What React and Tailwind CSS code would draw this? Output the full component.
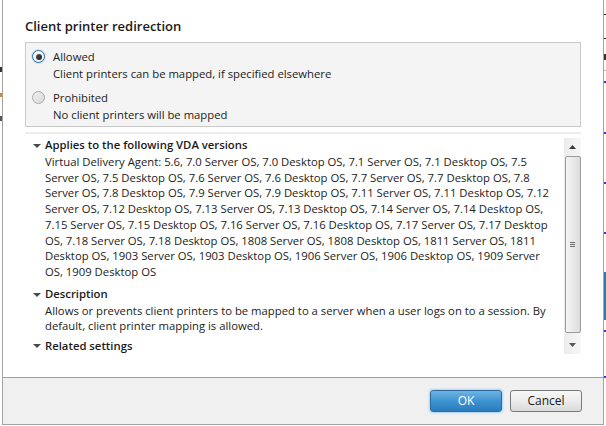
import React from 'react'

const vdaLines = [
  'Virtual Delivery Agent: 5.6, 7.0 Server OS, 7.0 Desktop OS, 7.1 Server OS, 7.1 Desktop OS, 7.5',
  'Server OS, 7.5 Desktop OS, 7.6 Server OS, 7.6 Desktop OS, 7.7 Server OS, 7.7 Desktop OS, 7.8',
  'Server OS, 7.8 Desktop OS, 7.9 Server OS, 7.9 Desktop OS, 7.11 Server OS, 7.11 Desktop OS, 7.12',
  'Server OS, 7.12 Desktop OS, 7.13 Server OS, 7.13 Desktop OS, 7.14 Server OS, 7.14 Desktop OS,',
  '7.15 Server OS, 7.15 Desktop OS, 7.16 Server OS, 7.16 Desktop OS, 7.17 Server OS, 7.17 Desktop',
  'OS, 7.18 Server OS, 7.18 Desktop OS, 1808 Server OS, 1808 Desktop OS, 1811 Server OS, 1811',
  'Desktop OS, 1903 Server OS, 1903 Desktop OS, 1906 Server OS, 1906 Desktop OS, 1909 Server',
  'OS, 1909 Desktop OS',
]

const descLines = [
  'Allows or prevents client printers to be mapped to a server when a user logs on to a session. By',
  'default, client printer mapping is allowed.',
]

function Radio({ checked }) {
  if (checked) {
    return (
      <div className="w-[15px] h-[15px] rounded-full bg-[#cfe4f7] flex items-center justify-center">
        <div className="w-[13px] h-[13px] rounded-full border border-[#2f6fa6] bg-gradient-to-b from-[#ffffff] to-[#e8f1fa] flex items-center justify-center">
          <div className="w-[6px] h-[6px] rounded-full bg-gradient-to-br from-[#555] to-[#1c1c1c]" />
        </div>
      </div>
    )
  }
  return (
    <div className="w-[15px] h-[15px] flex items-center justify-center">
      <div className="w-[13px] h-[13px] rounded-full border border-[#a8a8a8] bg-gradient-to-br from-[#f0f0f0] to-[#d8d8d8]" />
    </div>
  )
}

function Option({ checked, label, hint }) {
  return (
    <div className="flex items-start">
      <div className="w-[27px] pl-[5px] pt-[1px]">
        <Radio checked={checked} />
      </div>
      <div className="leading-[17px]">
        <div>{label}</div>
        <div>{hint}</div>
      </div>
    </div>
  )
}

function Caret() {
  return (
    <svg width="8" height="4" viewBox="0 0 8 4" className="block">
      <polygon points="0,0 8,0 4,4" fill="#4a4a4a" />
    </svg>
  )
}

function Section({ title, lines, className }) {
  return (
    <div className={className}>
      <div className="flex items-center h-[15.75px]">
        <div className="w-[14px] pl-[2px]">
          <Caret />
        </div>
        <div className="font-semibold text-[#1a1a1a]">{title}</div>
      </div>
      {lines.map((l, i) => (
        <div key={i} className="pl-[14px] whitespace-nowrap h-[15.75px] leading-[15.75px]">{l}</div>
      ))}
    </div>
  )
}

function Scrollbar() {
  return (
    <div className="w-[17px] h-[216px] mt-[4px] bg-gradient-to-r from-[#ececec] to-[#f6f6f6] flex flex-col items-center">
      <div className="h-[18px] flex items-center justify-center">
        <svg width="7" height="4" viewBox="0 0 7 4"><polygon points="0,4 7,4 3.5,0" fill="#3a3a3a" /></svg>
      </div>
      <div className="w-[16px] h-[177px] border border-[#9b9b9b] rounded-[2px] bg-gradient-to-r from-[#f4f4f4] via-[#e9e9e9] to-[#dcdcdc] flex items-center justify-center">
        <div className="flex flex-col gap-[1px]">
          <div className="w-[5px] h-px bg-[#6a6a6a]" />
          <div className="w-[5px] h-px bg-[#6a6a6a]" />
          <div className="w-[5px] h-px bg-[#6a6a6a]" />
        </div>
      </div>
      <div className="flex-1 flex items-center justify-center pt-[2px]">
        <svg width="7" height="4" viewBox="0 0 7 4"><polygon points="0,0 7,0 3.5,4" fill="#555" /></svg>
      </div>
    </div>
  )
}

export default function App() {
  return (
    <div className="w-[606px] h-[426px] bg-white flex overflow-hidden font-['Open_Sans',sans-serif] text-[11.3px] text-[#222]">
      {/* background window, left edge */}
      <div className="w-[2px] flex flex-col">
        <div className="h-[67px]" />
        <div className="h-[5px] bg-[#333]" />
        <div className="h-[21px]" />
        <div className="h-[4px] bg-[#d9822b]" />
        <div className="h-[19px]" />
        <div className="h-[5px] bg-[#555]" />
      </div>

      {/* dialog */}
      <div className="w-[602px] h-[425px] border-l border-r border-b border-[#a3a3a3] flex flex-col">
        <div className="h-[377px] px-[22px] pt-[16px]">
          <div className="text-[13px] font-semibold leading-[20px] text-[#1a1a1a]">Client printer redirection</div>

          <div className="mt-[6px] h-[85px] border border-[#c9c9c9] bg-[#f4f4f4] pt-[5px] flex flex-col gap-[7px]">
            <Option checked label="Allowed" hint="Client printers can be mapped, if specified elsewhere" />
            <Option label="Prohibited" hint="No client printers will be mapped" />
          </div>

          <div className="mt-[5px] h-[2px] bg-[#ededed]" />

          <div className="flex">
            <div className="flex-1 pt-[4px] pl-[6px]">
              <Section title="Applies to the following VDA versions" lines={vdaLines} className="mb-[7px]" />
              <Section title="Description" lines={descLines} className="mb-[4.5px]" />
              <Section title="Related settings" lines={[]} />
            </div>
            <Scrollbar />
          </div>
        </div>

        <div className="flex-1 border-t border-[#a0a0a0] bg-[#f0f0f0] flex justify-end items-start pt-[12px] pr-[21px] gap-[8px]">
          <button className="w-[72px] h-[22px] rounded-[3px] border border-[#2d6b9f] bg-gradient-to-b from-[#6fb3e4] via-[#3e93d1] to-[#2a7dbd] text-white text-[12px] leading-[20px] shadow-[0_0_2px_1px_#a9d3f2]">
            OK
          </button>
          <button className="w-[72px] h-[22px] rounded-[3px] border border-[#7a7a7a] bg-gradient-to-b from-[#f7f7f7] via-[#ececec] to-[#dadada] text-[#1a1a1a] text-[12px] leading-[20px]">
            Cancel
          </button>
        </div>
      </div>

      {/* background window, right edge */}
      <div className="w-[2px] flex flex-col">
        <div className="h-[14px]" />
        <div className="h-px bg-[#222]" />
        <div className="h-[23px]" />
        <div className="h-px bg-[#222]" />
        <div className="h-[15px]" />
        <div className="h-[6px] bg-[#333]" />
        <div className="h-[10px]" />
        <div className="h-px bg-[#bbb]" />
        <div className="h-[10px]" />
        <div className="h-[2px] bg-[#2a3dd6]" />
        <div className="h-[49px]" />
        <div className="h-[2px] bg-[#2a3dd6]" />
        <div className="h-[48px]" />
        <div className="h-[2px] bg-[#2a3dd6]" />
        <div className="h-[48px]" />
        <div className="h-[2px] bg-[#2a3dd6]" />
        <div className="h-[38px]" />
        <div className="h-[48px] bg-[#2a7fa8]" />
        <div className="h-[10px]" />
        <div className="h-[2px] bg-[#2a3dd6]" />
        <div className="h-[44px]" />
        <div className="h-[2px] bg-[#2a3dd6]" />
      </div>
    </div>
  )
}
